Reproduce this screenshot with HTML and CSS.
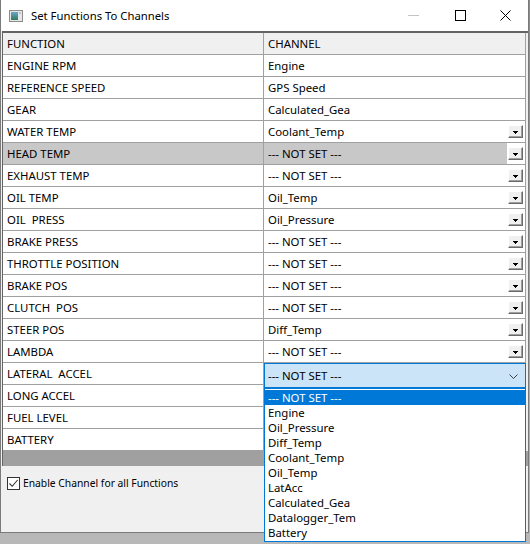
FILE: index.html
```html
<!DOCTYPE html>
<html>
<head>
<meta charset="utf-8">
<title>Set Functions To Channels</title>
<link rel="stylesheet" href="styles.css">
</head>
<body>
<div class="window">
  <div class="titlebar">
    <svg class="appicon" viewBox="0 0 14 12" width="14" height="12">
      <defs>
        <linearGradient id="g" x1="0" y1="0" x2="0" y2="1">
          <stop offset="0" stop-color="#6aa7c9"/>
          <stop offset="1" stop-color="#2f7a5e"/>
        </linearGradient>
      </defs>
      <rect x="0.5" y="0.5" width="13" height="11" fill="#e6e6e6" stroke="#8c8c8c"/>
      <rect x="2" y="2" width="7" height="8" fill="url(#g)"/>
      <rect x="10" y="2" width="2" height="2" fill="#b8c8d0"/>
    </svg>
    <span class="title">Set Functions To Channels</span>
    <div class="controls">
      <span class="ctl"><svg width="11" height="1" viewBox="0 0 11 1"><rect width="11" height="1" fill="#c4c4c4"/></svg></span>
      <span class="ctl"><svg width="11" height="11" viewBox="0 0 11 11"><rect x="0.5" y="0.5" width="10" height="10" fill="none" stroke="#000"/></svg></span>
      <span class="ctl"><svg width="11" height="11" viewBox="0 0 11 11"><path d="M0.5 0.5 L10.5 10.5 M10.5 0.5 L0.5 10.5" stroke="#000" stroke-width="1"/></svg></span>
    </div>
  </div>

  <div class="grid">
    <div class="row head"><div class="c1">FUNCTION</div><div class="c2"><span class="val">CHANNEL</span></div></div>
    <div class="row"><div class="c1">ENGINE RPM</div><div class="c2"><span class="val">Engine</span><span class="btnbox"></span></div></div>
    <div class="row"><div class="c1">REFERENCE SPEED</div><div class="c2"><span class="val">GPS Speed</span><span class="btnbox"></span></div></div>
    <div class="row"><div class="c1">GEAR</div><div class="c2"><span class="val">Calculated_Gea</span><span class="btnbox"></span></div></div>
    <div class="row"><div class="c1">WATER TEMP</div><div class="c2"><span class="val">Coolant_Temp</span><span class="btnbox"><span class="ddbtn"></span></span></div></div>
    <div class="row sel"><div class="c1">HEAD TEMP</div><div class="c2"><span class="val">--- NOT SET ---</span><span class="btnbox"><span class="ddbtn"></span></span></div></div>
    <div class="row"><div class="c1">EXHAUST TEMP</div><div class="c2"><span class="val">--- NOT SET ---</span><span class="btnbox"><span class="ddbtn"></span></span></div></div>
    <div class="row"><div class="c1">OIL TEMP</div><div class="c2"><span class="val">Oil_Temp</span><span class="btnbox"><span class="ddbtn"></span></span></div></div>
    <div class="row"><div class="c1">OIL&nbsp; PRESS</div><div class="c2"><span class="val">Oil_Pressure</span><span class="btnbox"><span class="ddbtn"></span></span></div></div>
    <div class="row"><div class="c1">BRAKE PRESS</div><div class="c2"><span class="val">--- NOT SET ---</span><span class="btnbox"><span class="ddbtn"></span></span></div></div>
    <div class="row"><div class="c1">THROTTLE POSITION</div><div class="c2"><span class="val">--- NOT SET ---</span><span class="btnbox"><span class="ddbtn"></span></span></div></div>
    <div class="row"><div class="c1">BRAKE POS</div><div class="c2"><span class="val">--- NOT SET ---</span><span class="btnbox"><span class="ddbtn"></span></span></div></div>
    <div class="row"><div class="c1">CLUTCH&nbsp; POS</div><div class="c2"><span class="val">--- NOT SET ---</span><span class="btnbox"><span class="ddbtn"></span></span></div></div>
    <div class="row"><div class="c1">STEER POS</div><div class="c2"><span class="val">Diff_Temp</span><span class="btnbox"><span class="ddbtn"></span></span></div></div>
    <div class="row"><div class="c1">LAMBDA</div><div class="c2"><span class="val">--- NOT SET ---</span><span class="btnbox"><span class="ddbtn"></span></span></div></div>
    <div class="row"><div class="c1">LATERAL&nbsp; ACCEL</div>
      <div class="c2 open">
        <span class="val"></span><span class="btnbox"></span>
        <div class="combo">
          <span>--- NOT SET ---</span>
          <svg class="chev" width="9" height="5" viewBox="0 0 9 5"><path d="M0.5 0.5 L4.5 4.5 L8.5 0.5" fill="none" stroke="#404040" stroke-width="1"/></svg>
        </div>
        <div class="list">
          <div class="opt hl">--- NOT SET ---</div>
          <div class="opt">Engine</div>
          <div class="opt">Oil_Pressure</div>
          <div class="opt">Diff_Temp</div>
          <div class="opt">Coolant_Temp</div>
          <div class="opt">Oil_Temp</div>
          <div class="opt">LatAcc</div>
          <div class="opt">Calculated_Gea</div>
          <div class="opt">Datalogger_Tem</div>
          <div class="opt">Battery</div>
        </div>
      </div>
    </div>
    <div class="row"><div class="c1">LONG ACCEL</div><div class="c2"><span class="val"></span><span class="btnbox"></span></div></div>
    <div class="row"><div class="c1">FUEL LEVEL</div><div class="c2"><span class="val"></span><span class="btnbox"></span></div></div>
    <div class="row"><div class="c1">BATTERY</div><div class="c2"><span class="val"></span><span class="btnbox"></span></div></div>
    <div class="empty"></div>
  </div>

  <div class="panel">
    <label class="chk">
      <span class="box"><svg width="11" height="11" viewBox="0 0 11 11"><path d="M1.5 5.5 L4.2 8.3 L9.6 2" fill="none" stroke="#333" stroke-width="1.1"/></svg></span>
      <span class="lbl">Enable Channel for all Functions</span>
    </label>
  </div>
</div>
</body>
</html>
```

FILE: styles.css
```css
* { box-sizing: border-box; }
html, body { margin: 0; padding: 0; }
body {
  width: 530px;
  height: 544px;
  overflow: hidden;
  background: linear-gradient(#8a8a8a, #b8b8b8);
  font-family: "Segoe UI", "Noto Sans", sans-serif;
  font-size: 11.4px;
  color: #000;
}
.window {
  width: 529px;
  height: 533px;
  background: #f0f0f0;
  border: 1px solid #7a7a7a;
  border-top: 0;
  display: flex;
  flex-direction: column;
}
.titlebar {
  height: 31px;
  flex-shrink: 0;
  background: #fff;
  display: flex;
  align-items: center;
}
.appicon { margin-left: 8px; margin-right: 8px; margin-top: 1px; }
.title { font-size: 11.3px; margin-top: -1px; }
.controls { margin-left: auto; display: flex; height: 100%; }
.ctl {
  width: 45px;
  display: flex;
  align-items: center;
  justify-content: center;
}
.ctl:first-child { padding-right: 4px; }
.ctl svg { display: block; }

.grid {
  margin-left: 1px;
  border-top: 2px solid #646464;
  border-left: 1px solid #646464;
  background: #f0f0f0;
  flex-shrink: 0;
}
.row { display: flex; height: 22px; }
.c1, .c2 {
  height: 22px;
  border-right: 1px solid #a0a0a0;
  border-bottom: 1px solid #a0a0a0;
  background: #fff;
}
.c1 {
  width: 261px;
  padding-left: 4px;
  display: flex;
  align-items: center;
  white-space: pre;
}
.c2 {
  width: 262px;
  display: flex;
}
.val {
  flex: 1;
  display: flex;
  align-items: center;
  padding-left: 4px;
  white-space: pre;
}
.btnbox {
  width: 18px;
  display: flex;
  align-items: center;
  background: #fff;
}
.head .c1, .head .c2, .head .val { background: #f0f0f0; }
.sel .c1, .sel .val { background: #c8c8c8; }

.ddbtn {
  width: 15px;
  height: 13px;
  margin-left: 1px;
  background: #f0f0f0;
  border-top: 1px solid #fff;
  border-left: 1px solid #fff;
  border-right: 1px solid #696969;
  border-bottom: 1px solid #696969;
  box-shadow: inset -1px -1px 0 #a0a0a0;
  position: relative;
}
.ddbtn::after {
  content: "";
  position: absolute;
  left: 6px;
  top: 7px;
  width: 1px;
  height: 1px;
  background: #000;
  box-shadow:
    -1px -1px 0 #000, 0 -1px 0 #000, 1px -1px 0 #000,
    -2px -2px 0 #000, -1px -2px 0 #000, 0 -2px 0 #000, 1px -2px 0 #000, 2px -2px 0 #000;
}

.open { position: relative; }
.combo {
  position: absolute;
  top: 0;
  left: 0;
  width: 262px;
  height: 25px;
  background: #cce4f7;
  border: 1px solid #0078d7;
  display: flex;
  align-items: center;
  padding-left: 3px;
  z-index: 2;
}
.chev { margin-left: auto; margin-right: 7px; margin-top: 1px; }
.list {
  position: absolute;
  top: 25px;
  left: 0;
  width: 262px;
  background: #fff;
  border: 1px solid #0078d7;
  padding: 1px 0;
  z-index: 3;
}
.opt {
  height: 15px;
  line-height: 16px;
  padding-left: 3px;
  white-space: pre;
}
.opt.hl { background: #0078d7; color: #fff; }

.empty { height: 15px; background: #a0a0a0; }

.panel {
  flex: 1;
  padding: 11px 0 0 6px;
}
.chk { display: flex; align-items: center; }
.box {
  width: 13px;
  height: 13px;
  border: 1px solid #333;
  background: #fff;
  display: flex;
  align-items: center;
  justify-content: center;
}
.box svg { display: block; }
.lbl { margin-left: 3px; font-size: 10.3px; margin-top: -1px; }
```
